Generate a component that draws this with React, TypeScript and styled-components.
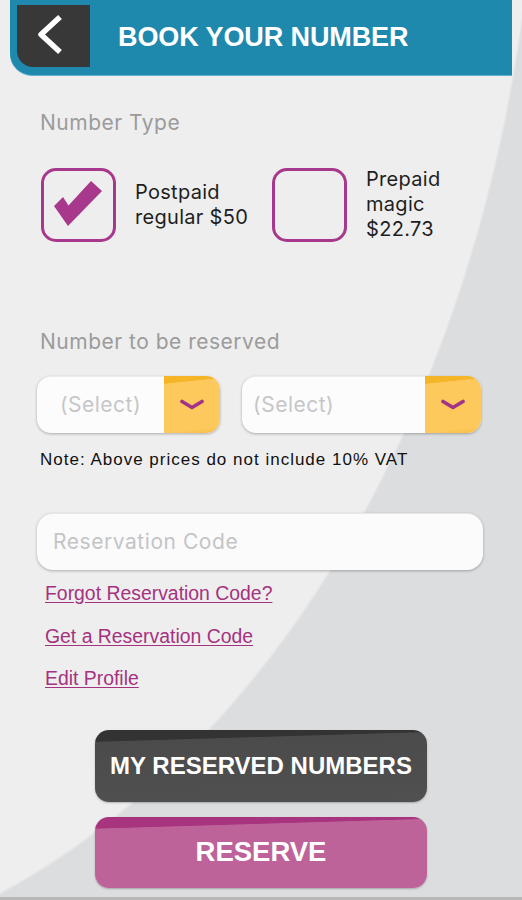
import React from 'react';
import styled, { createGlobalStyle } from 'styled-components';

const GlobalStyle = createGlobalStyle`
  html, body {
    margin: 0;
    padding: 0;
  }
  body {
    background: #dcdddf;
    font-family: Inter, "Liberation Sans", sans-serif;
  }
`;

const Page = styled.div`
  box-sizing: border-box;
  width: 522px;
  height: 900px;
  overflow: hidden;
  background: radial-gradient(838px 1173px at -300px -200px, #eeeeef 99.7%, #dcdddf 100%);
  border-bottom: 3px solid #b7b7b8;
`;

const Header = styled.header`
  display: flex;
  align-items: center;
  margin-left: 10px;
  width: 502px;
  height: 75px;
  background: #1f88ad;
  border-bottom-left-radius: 22px;
  box-shadow: 0 1px 0 #62b2cf;
`;

const BackButton = styled.button`
  align-self: flex-start;
  margin: 5px 0 0 7px;
  width: 73px;
  height: 62px;
  padding: 0;
  border: 0;
  background: #383838;
  border-bottom-left-radius: 16px;
  display: block;
`;

const Title = styled.h1`
  margin: 0 0 0 28px;
  font-family: "Liberation Sans", Arial, sans-serif;
  font-weight: 700;
  font-size: 27px;
  color: #ffffff;
  letter-spacing: -0.1px;
`;

const Content = styled.main`
  padding-left: 37px;
`;

const SectionLabel = styled.div<{ $top: number }>`
  margin: ${(p) => p.$top}px 0 0 3px;
  font-size: 21px;
  line-height: 24px;
  color: #9b9b9b;
  letter-spacing: 0.5px;
`;

const Options = styled.div`
  display: grid;
  grid-template-columns: 231px 1fr;
  margin: 32px 0 0 4px;
`;

const Option = styled.label`
  display: flex;
  align-items: center;
  gap: 19px;
`;

const CheckBox = styled.span`
  box-sizing: border-box;
  flex: none;
  width: 75px;
  height: 74px;
  border: 3px solid #a8388b;
  border-radius: 15px;
  display: block;
`;

const OptionText = styled.span`
  font-size: 20px;
  line-height: 25px;
  color: #1e1e1e;
  letter-spacing: 0.3px;
`;

const Selects = styled.div`
  display: grid;
  grid-template-columns: 183px 239px;
  gap: 22px;
  margin-top: 22px;
`;

const Select = styled.div`
  display: flex;
  height: 57px;
  border-radius: 14px;
  overflow: hidden;
  background: #fcfcfd;
  box-shadow: 0 1px 3px rgba(0, 0, 0, 0.28), inset 0 1px 0 rgba(0, 0, 0, 0.06);
`;

const SelectValue = styled.div<{ $center?: boolean }>`
  flex: 1;
  display: flex;
  align-items: center;
  justify-content: ${(p) => (p.$center ? 'center' : 'flex-start')};
  padding-left: ${(p) => (p.$center ? 0 : 11)}px;
  font-size: 21px;
  letter-spacing: 0.5px;
  color: #c6c6c8;
`;

const SelectArrow = styled.div`
  width: 56px;
  display: flex;
  align-items: center;
  justify-content: center;
  background: linear-gradient(174deg, #f6b526 0, #f6b526 12%, #fdc95c 13%, #fdc95c 90%, #f7bd42 100%);
`;

const Note = styled.p`
  margin: 17px 0 0 3px;
  font-family: "Liberation Sans", Arial, sans-serif;
  font-size: 17px;
  line-height: 20px;
  letter-spacing: 1px;
  color: #111111;
`;

const CodeInput = styled.input`
  box-sizing: border-box;
  display: block;
  width: 446px;
  height: 57px;
  margin-top: 43px;
  padding: 0 0 0 16px;
  border: 0;
  border-radius: 16px;
  background: #fbfbfc;
  box-shadow: 0 1px 3px rgba(0, 0, 0, 0.28), inset 0 1px 0 rgba(0, 0, 0, 0.08);
  font-family: Inter, "Liberation Sans", sans-serif;
  font-size: 21px;
  letter-spacing: 0.55px;
  color: #333;
  outline: none;
  &::placeholder {
    color: #c4c4c6;
  }
`;

const Links = styled.nav`
  display: flex;
  flex-direction: column;
  align-items: flex-start;
  margin: 2px 0 0 8px;
`;

const TextLink = styled.a`
  font-family: "Liberation Sans", Arial, sans-serif;
  font-size: 19.4px;
  line-height: 42.5px;
  color: #a5327f;
  text-decoration: underline;
  text-underline-offset: 2px;
`;

const Buttons = styled.div`
  display: flex;
  flex-direction: column;
  align-items: center;
  gap: 15px;
  margin-top: 30px;
`;

const ActionButton = styled.button<{ $variant: 'dark' | 'pink' }>`
  width: 332px;
  height: ${(p) => (p.$variant === 'dark' ? 72 : 71)}px;
  padding: 0;
  border: 0;
  border-radius: 14px;
  font-family: "Liberation Sans", Arial, sans-serif;
  font-weight: 700;
  font-size: ${(p) => (p.$variant === 'dark' ? 24 : 27.5)}px;
  color: #ffffff;
  background: ${(p) =>
    p.$variant === 'dark'
      ? 'linear-gradient(178.3deg, #333334 0, #333334 14%, #4b4b4c 15%, #505051 100%)'
      : 'linear-gradient(178.3deg, #a8347f 0, #a8347f 14%, #bd6399 15%, #bd6399 100%)'};
  box-shadow: 0 1px 2px rgba(0, 0, 0, 0.25);
`;

const ChevronLeft = () => (
  <svg width="73" height="62" viewBox="0 0 73 62">
    <polyline points="43,12 24,29.5 43,47" fill="none" stroke="#fff" strokeWidth="5.5" strokeLinejoin="round" />
  </svg>
);

const CheckMark = () => (
  <svg width="69" height="68" viewBox="3 3 69 68">
    <polygon points="13,38 22,29 27.5,37.5 50,13 61,23 27,58" fill="#a8388b" />
  </svg>
);

const ChevronDown = () => (
  <svg width="24" height="12" viewBox="0 0 24 12">
    <polyline points="2,2.5 12,8.5 22,2.5" fill="none" stroke="#a3328a" strokeWidth="3.6" strokeLinecap="round" strokeLinejoin="round" />
  </svg>
);

export default function App() {
  return (
    <Page>
      <GlobalStyle />
      <Header>
        <BackButton aria-label="Back">
          <ChevronLeft />
        </BackButton>
        <Title>BOOK YOUR NUMBER</Title>
      </Header>
      <Content>
        <SectionLabel $top={36}>Number Type</SectionLabel>
        <Options>
          <Option>
            <CheckBox>
              <CheckMark />
            </CheckBox>
            <OptionText>
              Postpaid
              <br />
              regular $50
            </OptionText>
          </Option>
          <Option>
            <CheckBox />
            <OptionText>
              Prepaid
              <br />
              magic
              <br />
              $22.73
            </OptionText>
          </Option>
        </Options>

        <SectionLabel $top={88}>Number to be reserved</SectionLabel>
        <Selects>
          <Select>
            <SelectValue $center>(Select)</SelectValue>
            <SelectArrow>
              <ChevronDown />
            </SelectArrow>
          </Select>
          <Select>
            <SelectValue>(Select)</SelectValue>
            <SelectArrow>
              <ChevronDown />
            </SelectArrow>
          </Select>
        </Selects>
        <Note>Note: Above prices do not include 10% VAT</Note>

        <CodeInput placeholder="Reservation Code" />
        <Links>
          <TextLink href="#">Forgot Reservation Code?</TextLink>
          <TextLink href="#">Get a Reservation Code</TextLink>
          <TextLink href="#">Edit Profile</TextLink>
        </Links>
      </Content>
      <Buttons>
        <ActionButton $variant="dark">MY RESERVED NUMBERS</ActionButton>
        <ActionButton $variant="pink">RESERVE</ActionButton>
      </Buttons>
    </Page>
  );
}
